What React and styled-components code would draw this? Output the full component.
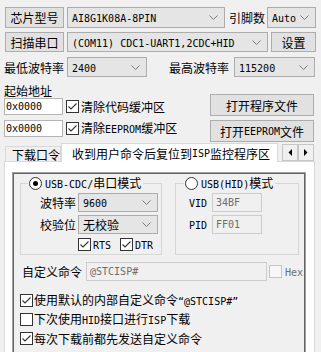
import React from 'react';
import styled, { createGlobalStyle } from 'styled-components';

const GlobalStyle = createGlobalStyle`
  html, body { margin: 0; padding: 0; background: #f0f0f0; }
  body {
    font-family: "Noto Sans CJK SC", "Noto Sans", sans-serif;
    font-size: 12px;
    line-height: 13px;
    color: #000;
  }
  * { box-sizing: border-box; }
`;

const Page = styled.div`
  width: 321px;
  height: 352px;
  overflow: hidden;
  background: #f0f0f0;
  padding-top: 7px;
`;

const Row = styled.div`
  display: flex;
  align-items: center;
  height: ${p => p.$h}px;
  margin-top: ${p => p.$mt || 0}px;
  padding-left: ${p => (p.$pl ?? 5)}px;
`;

const Lat = styled.span`
  font-family: "DejaVu Sans Mono", "Liberation Mono", monospace;
  font-size: 10px;
`;

const Btn = styled.button`
  flex: none;
  width: ${p => p.$w}px;
  height: ${p => p.$h || 20}px;
  margin-left: ${p => p.$ml || 0}px;
  background: #e1e1e1;
  border: 1px solid #adadad;
  padding: 0;
  font: inherit;
  color: #000;
  display: flex;
  align-items: center;
  justify-content: center;
  white-space: nowrap;
`;

const ComboBox = styled.div`
  flex: none;
  display: flex;
  align-items: center;
  justify-content: space-between;
  width: ${p => p.$w}px;
  height: ${p => p.$h || 20}px;
  margin-left: ${p => p.$ml || 0}px;
  background: #e5e5e5;
  border: 1px solid #acacac;
  padding: 0 6px 0 4px;
  white-space: nowrap;
  overflow: hidden;
`;

const ComboText = styled.span`
  white-space: nowrap;
`;

const Chevron = () => (
  <svg width="9" height="5" viewBox="0 0 9 5" style={{ flex: 'none' }}>
    <polyline points="0.5,0.5 4.5,4.5 8.5,0.5" fill="none" stroke="#7a7a7a" strokeWidth="1" />
  </svg>
);

const Combo = ({ w, h, ml, children }) => (
  <ComboBox $w={w} $h={h} $ml={ml}>
    <ComboText>{children}</ComboText>
    <Chevron />
  </ComboBox>
);

const Label = styled.span`
  flex: none;
  white-space: nowrap;
  width: ${p => (p.$w ? `${p.$w}px` : 'auto')};
  margin-left: ${p => p.$ml || 0}px;
  padding-left: ${p => p.$pl || 0}px;
  text-align: ${p => p.$align || 'left'};
  color: ${p => (p.$dim ? '#6d6d6d' : '#000')};
`;

const TextBox = styled.div`
  flex: none;
  display: flex;
  align-items: center;
  width: ${p => p.$w}px;
  height: ${p => p.$h || 17}px;
  margin-left: ${p => p.$ml || 0}px;
  background: ${p => (p.$disabled ? '#f0f0f0' : '#fff')};
  border: 1px solid ${p => (p.$disabled ? '#cccccc' : '#b4b4b4')};
  color: ${p => (p.$disabled ? '#6d6d6d' : '#000')};
  padding-left: ${p => p.$pad ?? 1}px;
  white-space: nowrap;
  overflow: hidden;
`;

const CheckBox = styled.span`
  flex: none;
  width: 13px;
  height: 13px;
  margin-left: ${p => p.$ml || 0}px;
  border: 1px solid ${p => (p.$disabled ? '#c4c4c4' : '#333')};
  background: ${p => (p.$disabled ? '#f7f7f7' : '#fff')};
  display: flex;
  align-items: center;
  justify-content: center;
`;

const Check = ({ checked, disabled, ml }) => (
  <CheckBox $disabled={disabled} $ml={ml}>
    {checked && (
      <svg width="11" height="11" viewBox="0 0 11 11">
        <polyline points="1.5,5.5 4,8 9.5,2.5" fill="none" stroke="#333" strokeWidth="1.1" />
      </svg>
    )}
  </CheckBox>
);

const RadioCircle = styled.span`
  flex: none;
  width: 13px;
  height: 13px;
  border-radius: 50%;
  border: 1px solid #333;
  background: #fff;
  display: flex;
  align-items: center;
  justify-content: center;
`;

const RadioDot = styled.span`
  width: 5px;
  height: 5px;
  border-radius: 50%;
  background: #000;
`;

const Radio = ({ on }) => <RadioCircle>{on && <RadioDot />}</RadioCircle>;

const AddrBlock = styled.div`
  display: flex;
  margin-top: 7px;
  padding-left: 4px;
`;

const LeftCol = styled.div`
  width: 206px;
  display: flex;
  flex-direction: column;
`;

const InputRow = styled.div`
  display: flex;
  align-items: center;
  height: 17px;
  margin-top: ${p => p.$mt || 0}px;
`;

const ButtonCol = styled.div`
  display: flex;
  flex-direction: column;
  gap: 4px;
  margin-top: 10px;
`;

const TabStrip = styled.div`
  display: flex;
  align-items: flex-start;
  height: 19px;
  margin-top: 1px;
  padding-left: 5px;
  position: relative;
  z-index: 1;
`;

const Tab = styled.div`
  flex: none;
  width: ${p => p.$w}px;
  height: ${p => (p.$active ? 19 : 15)}px;
  margin-top: ${p => (p.$active ? 0 : 3)}px;
  border: 1px solid #d9d9d9;
  border-bottom: none;
  background: ${p => (p.$active ? '#fff' : '#f0f0f0')};
  padding-left: ${p => p.$pl}px;
  display: flex;
  align-items: center;
  white-space: nowrap;
`;

const ArrowGroup = styled.div`
  display: flex;
  margin-top: 1px;
  margin-left: 4px;
`;

const ArrowBtn = styled.div`
  width: 16px;
  height: 17px;
  background: #f0f0f0;
  border: 1px solid #c6c6c6;
  display: flex;
  align-items: center;
  justify-content: center;
`;

const Panel = styled.div`
  width: 311px;
  height: 200px;
  margin-top: -1px;
  margin-left: 4px;
  border: 1px solid #d9d9d9;
  background: #fff;
  padding: 10px 8px 0 7px;
`;

const Frame = styled.div`
  width: 294px;
  height: 200px;
  border: 1px solid #a0a0a0;
  box-shadow: inset 0 0 0 1px #646464;
  background: #f0f0f0;
  padding: 1px;
`;

const GroupsRow = styled.div`
  display: flex;
  margin-top: 3px;
`;

const Group = styled.fieldset`
  flex: none;
  margin: 0 0 0 ${p => p.$ml}px;
  width: ${p => p.$w}px;
  height: 78px;
  border: 1px solid #d5d5d5;
  padding: 0;
  min-width: 0;
`;

const GroupLegend = styled.legend`
  display: flex;
  align-items: center;
  gap: 3px;
  padding: 0 2px 0 1px;
  margin-left: ${p => p.$ml}px;
  height: 13px;
  white-space: nowrap;
`;

const FieldRow = styled.div`
  display: flex;
  align-items: center;
  height: ${p => p.$h || 19}px;
  margin-top: ${p => p.$mt || 3}px;
  padding-left: ${p => p.$pl || 0}px;
`;

const CheckRow = styled.div`
  display: flex;
  align-items: center;
  height: 13px;
  margin-top: ${p => p.$mt}px;
  padding-left: 6px;
  white-space: nowrap;
`;

const TriLeft = () => (
  <svg width="4" height="7" viewBox="0 0 4 7"><polygon points="4,0 4,7 0.5,3.5" fill="#000" /></svg>
);
const TriRight = () => (
  <svg width="4" height="7" viewBox="0 0 4 7"><polygon points="0,0 0,7 3.5,3.5" fill="#000" /></svg>
);

export default function App() {
  return (
    <>
      <GlobalStyle />
      <Page>
        <Row $h={21}>
          <Btn $w={59} $h={21}>芯片型号</Btn>
          <Combo w={158} h={21} ml={3}><Lat>AI8G1K08A-8PIN</Lat></Combo>
          <Label $ml={4}>引脚数</Label>
          <Combo w={49} h={21} ml={2}><Lat>Auto</Lat></Combo>
        </Row>
        <Row $h={20} $mt={4}>
          <Btn $w={59} $h={20}>扫描串口</Btn>
          <Combo w={201} h={20} ml={3}><Lat>(COM11) CDC1-UART1,2CDC+HID</Lat></Combo>
          <Btn $w={45} $h={20} $ml={3}>设置</Btn>
        </Row>
        <Row $h={20} $mt={5} $pl={4}>
          <Label>最低波特率</Label>
          <Combo w={80} h={20} ml={3}><Lat>2400</Lat></Combo>
          <Label $ml={22}>最高波特率</Label>
          <Combo w={81} h={20} ml={5}><Lat>115200</Lat></Combo>
        </Row>
        <AddrBlock>
          <LeftCol>
            <Label>起始地址</Label>
            <InputRow $mt={1}>
              <TextBox $w={59}><Lat>0x0000</Lat></TextBox>
              <Check checked ml={3} />
              <Label $ml={2}>清除代码缓冲区</Label>
            </InputRow>
            <InputRow $mt={5}>
              <TextBox $w={59}><Lat>0x0000</Lat></TextBox>
              <Check checked ml={3} />
              <Label $ml={2}>清除<Lat>EEPROM</Lat>缓冲区</Label>
            </InputRow>
          </LeftCol>
          <ButtonCol>
            <Btn $w={104} $h={22}>打开程序文件</Btn>
            <Btn $w={104} $h={22}>打开<Lat>EEPROM</Lat>文件</Btn>
          </ButtonCol>
        </AddrBlock>
        <TabStrip>
          <Tab $w={56} $pl={6}>下载口令</Tab>
          <Tab $w={217} $pl={10} $active>收到用户命令后复位到<Lat>ISP</Lat>监控程序区</Tab>
          <ArrowGroup>
            <ArrowBtn><TriLeft /></ArrowBtn>
            <ArrowBtn><TriRight /></ArrowBtn>
          </ArrowGroup>
        </TabStrip>
        <Panel>
          <Frame>
            <GroupsRow>
              <Group $ml={6} $w={142}>
                <GroupLegend $ml={7}>
                  <Radio on />
                  <span><Lat>USB-CDC/</Lat>串口模式</span>
                </GroupLegend>
                <FieldRow>
                  <Label $w={55} $align="right">波特率</Label>
                  <Combo w={80} h={19} ml={2}><Lat>9600</Lat></Combo>
                </FieldRow>
                <FieldRow>
                  <Label $w={55} $align="right">校验位</Label>
                  <Combo w={80} h={19} ml={2}>无校验</Combo>
                </FieldRow>
                <FieldRow $h={13} $mt={4} $pl={57}>
                  <Check checked />
                  <Label $ml={2}><Lat>RTS</Lat></Label>
                  <Check checked ml={9} />
                  <Label $ml={2}><Lat>DTR</Lat></Label>
                </FieldRow>
              </Group>
              <Group $ml={13} $w={124}>
                <GroupLegend $ml={8}>
                  <Radio />
                  <span><Lat>USB(HID)</Lat>模式</span>
                </GroupLegend>
                <FieldRow>
                  <Label $w={36} $pl={13}><Lat>VID</Lat></Label>
                  <TextBox $w={50} $h={19} $disabled $pad={3}><Lat>34BF</Lat></TextBox>
                </FieldRow>
                <FieldRow>
                  <Label $w={36} $pl={13}><Lat>PID</Lat></Label>
                  <TextBox $w={50} $h={19} $disabled $pad={3}><Lat>FF01</Lat></TextBox>
                </FieldRow>
              </Group>
            </GroupsRow>
            <FieldRow $mt={7} $pl={8}>
              <Label>自定义命令</Label>
              <TextBox $w={181} $h={19} $ml={4} $disabled $pad={3}><Lat>@STCISP#</Lat></TextBox>
              <Check disabled ml={2} />
              <Label $ml={3} $dim><Lat>Hex</Lat></Label>
            </FieldRow>
            <CheckRow $mt={13}>
              <Check checked />
              <Label $ml={1}>使用默认的内部自定义命令<Lat>“@STCISP#”</Lat></Label>
            </CheckRow>
            <CheckRow $mt={6}>
              <Check />
              <Label $ml={1}>下次使用<Lat>HID</Lat>接口进行<Lat>ISP</Lat>下载</Label>
            </CheckRow>
            <CheckRow $mt={6}>
              <Check checked />
              <Label $ml={1}>每次下载前都先发送自定义命令</Label>
            </CheckRow>
          </Frame>
        </Panel>
      </Page>
    </>
  );
}
